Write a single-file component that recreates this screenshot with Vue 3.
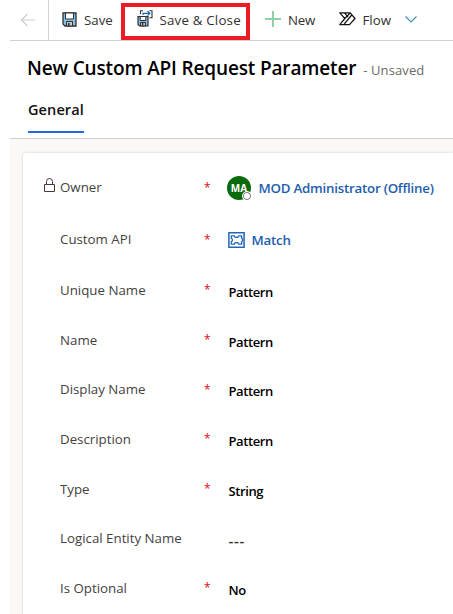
<script setup>
const fields = [
  { label: 'Owner', required: true, value: 'MOD Administrator (Offline)', kind: 'owner' },
  { label: 'Custom API', required: true, value: 'Match', kind: 'api' },
  { label: 'Unique Name', required: true, value: 'Pattern', kind: 'text' },
  { label: 'Name', required: true, value: 'Pattern', kind: 'text' },
  { label: 'Display Name', required: true, value: 'Pattern', kind: 'text' },
  { label: 'Description', required: true, value: 'Pattern', kind: 'text' },
  { label: 'Type', required: true, value: 'String', kind: 'text' },
  { label: 'Logical Entity Name', required: false, value: '---', kind: 'text' },
  { label: 'Is Optional', required: true, value: 'No', kind: 'text' },
]
</script>

<template>
  <div class="page">
    <header class="bar">
      <div class="back">
        <svg width="16" height="14" viewBox="0 0 16 14" fill="none" stroke="#d0cecc" stroke-width="1.2"><path d="M15 7H1.5M7.5 1L1.5 7l6 6" /></svg>
      </div>
      <button class="cmd save">
        <svg width="15" height="15" viewBox="0 0 15 15">
          <path d="M1 1h13v13H3l-2-2z" fill="#83beec" stroke="#323130" stroke-width="1.3" />
          <path d="M3.500 1h8v6h-8z" fill="#fff" stroke="#323130" />
          <path d="M4.500 14V9.500h6V14z" fill="#c8c6c4" stroke="#323130" /><path d="M6 11h1.600v3H6z" fill="#323130" />
        </svg>
        <span>Save</span>
      </button>
      <button class="cmd close">
        <svg width="16" height="17" viewBox="0 0 16 17" fill="none">
          <path d="M1 6.500h10V16H2.500L1 14.500z" fill="#83beec" stroke="#323130" stroke-width="1.2" />
          <path d="M3.200 6.500h5.600v4H3.200z" fill="#fff" stroke="#323130" />
          <path d="M3.500 16v-3.500h5V16z" fill="#c8c6c4" stroke="#323130" /><path d="M5 13h1.300v3H5z" fill="#323130" />
          <path d="M6 .7H3.500V4M12.500.7H15v7h-2.500" stroke="#323130" stroke-width="1.1" />
          <path d="M6 5V3.300h6.500M10.500 1l2.300 2.300-2.300 2.300" stroke="#1267b4" stroke-width="1.2" />
        </svg>
        <span>Save &amp; Close</span>
      </button>
      <button class="cmd new">
        <svg width="16" height="16" viewBox="0 0 16 16" stroke="#8fd0a8" stroke-width="2"><path d="M8 0v16M0 8h16" /></svg>
        <span>New</span>
      </button>
      <button class="cmd flow">
        <svg width="17" height="14" viewBox="0 0 17 14" fill="none" stroke="#111" stroke-width="1.2" stroke-linejoin="round">
          <path d="M.8.8h10.400L16 6.500l-5.500 6.200H.8l5-6.200zM11.200.8L5.800 6.500M12.700 3L4.800 12.700M5.500.8l3.600 4.400" />
        </svg>
        <span>Flow</span>
        <svg class="chev" width="12" height="7" viewBox="0 0 12 7" fill="none" stroke="#3f8eb8" stroke-width="1.1"><path d="M.5.5L6 6l5.500-5.500" /></svg>
      </button>
    </header>

    <section class="heading">
      <div class="title-row">
        <h1>New Custom API Request Parameter</h1>
        <span class="status">- Unsaved</span>
      </div>
      <nav><a class="tab">General</a></nav>
    </section>

    <main class="body">
      <div class="card">
        <div v-for="f in fields" :key="f.label" class="row" :class="f.kind">
          <div class="lock">
            <svg v-if="f.kind === 'owner'" width="11" height="14" viewBox="0 0 11 14" fill="none" stroke="#4a3440"><path d="M.5 6.500h10v7H.5zM2.500 6.500v-3a3 3 0 0 1 6 0v3" /></svg>
          </div>
          <div class="label">{{ f.label }}</div>
          <div class="star"><span v-if="f.required">*</span></div>
          <div class="value" :class="{ link: f.kind !== 'text', empty: !f.required }">
            <div v-if="f.kind === 'owner'" class="avatar">MA<i class="presence"></i></div>
            <svg v-if="f.kind === 'api'" class="puzzle" width="17" height="16" viewBox="0 0 17 16" fill="none" stroke="#2266b8">
              <path d="M.9.8h15.200v14.400H.9z" stroke-width="1.5" />
              <path d="M3.300 3.800h3l1 1.500h2.400l1-1.500h3v2.700l1 .5v2l-1 .5v2.700h-3l-1-1.500H7.300l-1 1.500h-3V9.500l1-.5V7l-1-.5z" stroke-width="1.300" stroke-linejoin="round" />
            </svg>
            <span>{{ f.value }}</span>
          </div>
        </div>
      </div>
    </main>
  </div>
</template>

<style>
body { background: #fff; overflow: hidden; }
</style>

<style scoped>
.page { box-sizing: border-box; width: 453px; height: 614px; padding-left: 10px; overflow: hidden; background: #fff; font-family: "Open Sans", "Noto Sans", sans-serif; font-size: 13.3px; color: #323130; display: flex; flex-direction: column; }
.bar { box-sizing: border-box; height: 41px; flex: none; display: flex; border-bottom: 1px solid #d2d2d2; }
.back { box-sizing: border-box; width: 39px; border-right: 1px solid #d2d2d2; display: flex; align-items: center; padding-left: 10px; }
.cmd { box-sizing: border-box; height: 40px; border: 0; background: none; padding: 0; font: inherit; color: #323130; display: flex; align-items: center; white-space: nowrap; flex: none; text-align: left; }
.cmd svg { flex: none; }
.save { width: 72px; padding-left: 13px; gap: 7px; }
.save svg { margin-bottom: 2px; }
.close { width: 129px; height: 37px; margin-top: 3px; border: 4px solid #ed1c24; padding-left: 12px; gap: 6.5px; letter-spacing: .2px; }
.close svg { margin-bottom: 6px; }
.close span { margin-bottom: 3px; }
.new { padding-left: 15px; gap: 7px; width: 89px; letter-spacing: -.2px; }
.new svg { margin-bottom: 2px; }
.flow { gap: 6.5px; }
.flow svg { margin-bottom: 3px; }
.flow .chev { margin-left: 7px; margin-bottom: 2px; }
.heading { box-sizing: border-box; height: 98px; flex: none; padding: 13px 0 0 18px; border-bottom: 1px solid #d2d0ce; }
.title-row { display: flex; align-items: baseline; height: 28px; margin-left: -1px; white-space: nowrap; }
h1 { margin: 0; font-size: 19px; line-height: 28px; font-weight: 600; letter-spacing: -.15px; color: #000; }
.status { margin-left: 7px; font-size: 13px; color: #6b6967; letter-spacing: .1px; }
nav { display: flex; }
.tab { box-sizing: border-box; width: 56px; height: 51px; padding-top: 18px; line-height: 20px; border-bottom: 2px solid #2266e3; font-size: 14.5px; font-weight: 600; letter-spacing: .1px; color: #111; white-space: nowrap; }
.body { flex: 1; background: #faf9f8; padding: 14px 0 0 13px; }
.card { box-sizing: border-box; height: 470px; padding: 8px 0 0 20px; background: #fff; border-radius: 2px 0 0 0; box-shadow: 0 0 3px rgba(0, 0, 0, .18); }
.row { display: grid; grid-template-columns: 17px 144px 24px 1fr; height: 49.7px; align-items: center; white-space: nowrap; }
.row.owner, .row.api { height: 52px; }
.lock { display: flex; padding: 0 0 4px 1px; }
.label { color: #444240; }
.star { color: #e00b1c; font-size: 12px; }
.value { display: flex; align-items: center; padding-top: 4px; font-weight: 600; font-size: 13px; letter-spacing: -.4px; color: #000; margin-left: .5px; }
.link { color: #1d5dad; padding-top: 1px; font-size: 13.3px; letter-spacing: -.23px; }
.empty { color: #323130; font-size: 15px; letter-spacing: .7px; }
.avatar { position: relative; width: 24px; height: 24px; margin: 0 7.5px 0 -1.500px; border-radius: 50%; background: #0b6a0b; color: #fff; font-size: 10px; font-weight: 700; letter-spacing: 0; line-height: 24px; text-align: center; }
.presence { position: absolute; right: -1px; bottom: -1px; box-sizing: border-box; width: 10px; height: 10px; border-radius: 50%; border: 1px solid #fff; background: #fff; box-shadow: inset 0 0 0 1px #777; }
.puzzle { margin: 0 6.5px 0 -.5px; }
</style>
